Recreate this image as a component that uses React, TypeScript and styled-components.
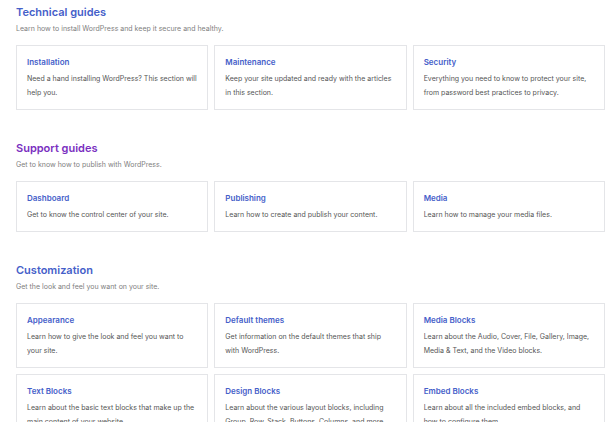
import * as React from 'react'
import styled, { createGlobalStyle } from 'styled-components'

const GlobalStyle = createGlobalStyle`
  body {
    margin: 0;
    background: #fff;
    font-family: Inter, "Noto Sans", sans-serif;
  }
`

interface IGuide {
  title: string
  text: string
}

interface ISection {
  title: string
  color: string
  description: string
  guides: IGuide[]
}

const sections: ISection[] = [
  {
    title: 'Technical guides',
    color: '#4560c9',
    description: 'Learn how to install WordPress and keep it secure and healthy.',
    guides: [
      { title: 'Installation', text: 'Need a hand installing WordPress? This section will help you.' },
      { title: 'Maintenance', text: 'Keep your site updated and ready with the articles in this section.' },
      { title: 'Security', text: 'Everything you need to know to protect your site, from password best practices to privacy.' }
    ]
  },
  {
    title: 'Support guides',
    color: '#7a2fbf',
    description: 'Get to know how to publish with WordPress.',
    guides: [
      { title: 'Dashboard', text: 'Get to know the control center of your site.' },
      { title: 'Publishing', text: 'Learn how to create and publish your content.' },
      { title: 'Media', text: 'Learn how to manage your media files.' }
    ]
  },
  {
    title: 'Customization',
    color: '#4560c9',
    description: 'Get the look and feel you want on your site.',
    guides: [
      { title: 'Appearance', text: 'Learn how to give the look and feel you want to your site.' },
      { title: 'Default themes', text: 'Get information on the default themes that ship with WordPress.' },
      { title: 'Media Blocks', text: 'Learn about the Audio, Cover, File, Gallery, Image, Media & Text, and the Video blocks.' },
      { title: 'Text Blocks', text: 'Learn about the basic text blocks that make up the main content of your website.' },
      { title: 'Design Blocks', text: 'Learn about the various layout blocks, including Group, Row, Stack, Buttons, Columns, and more.' },
      { title: 'Embed Blocks', text: 'Learn about all the included embed blocks, and how to configure them.' }
    ]
  }
]

const App: React.FC = () => (
  <React.Fragment>
    <GlobalStyle />
    <Page>
      {sections.map((section) => (
        <Section key={section.title}>
          <SectionTitle color={section.color}>{section.title}</SectionTitle>
          <SectionDescription>{section.description}</SectionDescription>
          <CardGrid>
            {section.guides.map((guide) => (
              <Card key={guide.title}>
                <CardTitle>{guide.title}</CardTitle>
                <CardText>{guide.text}</CardText>
              </Card>
            ))}
          </CardGrid>
        </Section>
      ))}
    </Page>
  </React.Fragment>
)

const Page = styled.div`
  padding: 5px 3px 0 16px;
  display: flex;
  flex-direction: column;
  gap: 31px;
`

const Section = styled.section`
  display: flex;
  flex-direction: column;
`

const SectionTitle = styled.h2<{ color: string }>`
  margin: 0;
  font-size: 11px;
  line-height: 14px;
  font-weight: 600;
  color: ${(p) => p.color};
`

const SectionDescription = styled.p`
  margin: 4px 0 10px;
  font-size: 7px;
  line-height: 12px;
  color: #808080;
`

const CardGrid = styled.div`
  display: grid;
  grid-template-columns: repeat(3, 1fr);
  gap: 6px;
`

const Card = styled.div`
  border: 1px solid #e4e5e8;
  padding: 10px 10px 9px;
`

const CardTitle = styled.h3`
  margin: 0 0 4px;
  font-size: 8px;
  line-height: 12px;
  font-weight: 600;
  color: #4560c9;
`

const CardText = styled.p`
  margin: 0;
  font-size: 7px;
  line-height: 14px;
  color: #555;
`

export default App
